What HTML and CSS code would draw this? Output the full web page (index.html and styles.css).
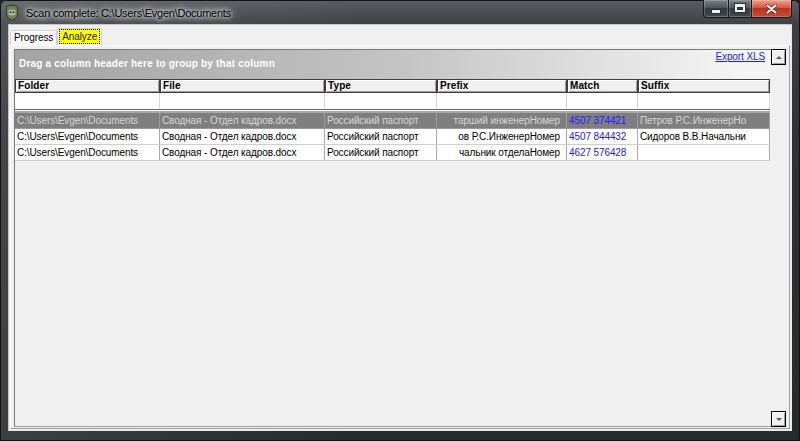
FILE: index.html
```html
<!DOCTYPE html>
<html lang="en">
<head>
    <meta charset="UTF-8">
    <title>Scan complete</title>
    <link rel="stylesheet" href="styles.css">
</head>
<body>
    <div class="window">
        <div class="titlebar">
            <svg class="app-icon" viewBox="0 0 12 15" width="14" height="17">
                <path d="M1 2.5 Q6 -0.5 11 2.5 L11 9 Q11 12.5 6 14.5 Q1 12.5 1 9 Z" fill="#6f8058" stroke="#2c3322" stroke-width="0.8"/>
                <rect x="3" y="5" width="6" height="5" rx="1" fill="#b9c3a3"/>
                <circle cx="4.7" cy="7.2" r="0.9" fill="#2c3322"/>
                <circle cx="7.3" cy="7.2" r="0.9" fill="#2c3322"/>
            </svg>
            <span class="title">Scan complete: C:\Users\Evgen\Documents</span>
            <div class="caption-buttons">
                <div class="cap-btn cap-min"><span></span></div>
                <div class="cap-btn cap-max"><span></span></div>
                <div class="cap-btn cap-close">
                    <svg viewBox="0 0 11 10" width="11" height="10">
                        <path d="M1.5 1.5 L9.5 8.5 M9.5 1.5 L1.5 8.5" stroke="#5b1a0f" stroke-width="3.6" stroke-linecap="round"/>
                        <path d="M1.5 1.5 L9.5 8.5 M9.5 1.5 L1.5 8.5" stroke="#fff" stroke-width="2.2" stroke-linecap="round"/>
                    </svg>
                </div>
            </div>
        </div>

        <div class="client">
            <div class="tabs">
                <div class="tab">Progress</div>
                <div class="tab tab-active"><span>Analyze</span></div>
            </div>

            <div class="tab-page">
                <div class="grid">
                    <div class="grid-main">
                        <div class="group-panel">
                            <span class="group-text">Drag a column header here to group by that column</span>
                            <a href="#" class="export-link">Export XLS</a>
                        </div>

                        <div class="cols header-row">
                            <div class="hcell">Folder</div>
                            <div class="hcell">File</div>
                            <div class="hcell">Type</div>
                            <div class="hcell">Prefix</div>
                            <div class="hcell">Match</div>
                            <div class="hcell">Suffix</div>
                        </div>

                        <div class="cols filter-row">
                            <div class="fcell"></div>
                            <div class="fcell"></div>
                            <div class="fcell"></div>
                            <div class="fcell"></div>
                            <div class="fcell"></div>
                            <div class="fcell"></div>
                        </div>

                        <div class="rows-sep"></div>

                        <div class="cols data-row selected">
                            <div class="cell">C:\Users\Evgen\Documents</div>
                            <div class="cell">Сводная - Отдел кадров.docx</div>
                            <div class="cell">Российский паспорт</div>
                            <div class="cell prefix">тарший инженерНомер</div>
                            <div class="cell match">4507 374421</div>
                            <div class="cell">Петров Р.С.ИнженерНо</div>
                        </div>
                        <div class="cols data-row">
                            <div class="cell">C:\Users\Evgen\Documents</div>
                            <div class="cell">Сводная - Отдел кадров.docx</div>
                            <div class="cell">Российский паспорт</div>
                            <div class="cell prefix">ов Р.С.ИнженерНомер</div>
                            <div class="cell match">4507 844432</div>
                            <div class="cell">Сидоров В.В.Начальни</div>
                        </div>
                        <div class="cols data-row">
                            <div class="cell">C:\Users\Evgen\Documents</div>
                            <div class="cell">Сводная - Отдел кадров.docx</div>
                            <div class="cell">Российский паспорт</div>
                            <div class="cell prefix">чальник отделаНомер</div>
                            <div class="cell match">4627 576428</div>
                            <div class="cell"></div>
                        </div>
                    </div>

                    <div class="vscroll">
                        <div class="scroll-btn"><span class="arrow-up"></span></div>
                        <div class="scroll-btn"><span class="arrow-down"></span></div>
                    </div>
                </div>
            </div>
        </div>
    </div>
</body>
</html>
```

FILE: styles.css
```css
* {
    margin: 0;
    padding: 0;
    box-sizing: border-box;
}

body {
    width: 800px;
    height: 441px;
    overflow: hidden;
    background: #1b2420;
    font-family: "Liberation Sans", Arial, sans-serif;
    font-size: 10px;
    letter-spacing: -0.1px;
    color: #000;
}

/* Window frame */
.window {
    width: 800px;
    height: 441px;
    display: flex;
    flex-direction: column;
    border-radius: 6px 6px 0 0;
    background:
        linear-gradient(to right, rgba(255, 255, 255, 0.10), rgba(255, 255, 255, 0) 45%),
        linear-gradient(to bottom, #5a5e62, #3d4145 24px, #2e3236 140px, #262a2d);
    box-shadow: inset 0 0 0 1px #101315;
}

.titlebar {
    height: 24px;
    display: flex;
    align-items: flex-start;
    padding-left: 5px;
}

.app-icon {
    flex: none;
    margin-top: 4px;
}

.title {
    margin-left: 7px;
    padding-top: 1px;
    font-size: 11px;
    letter-spacing: -0.25px;
    line-height: 24px;
    color: #000;
    text-shadow:
        0 0 4px #fff,
        0 0 7px rgba(255, 255, 255, 0.9),
        0 0 12px rgba(255, 255, 255, 0.6);
}

.caption-buttons {
    margin-left: auto;
    margin-right: 8px;
    display: flex;
    height: 18px;
}

.cap-btn {
    height: 18px;
    display: flex;
    align-items: center;
    justify-content: center;
    border: 1px solid #15181b;
    border-top: none;
    box-shadow: inset 0 0 0 1px rgba(255, 255, 255, 0.22);
    background: linear-gradient(#7a7f84, #50555a 45%, #363a3e 50%, #42474c);
}

.cap-min {
    width: 25px;
    border-radius: 0 0 0 4px;
    border-right: none;
}

.cap-min span {
    width: 10px;
    height: 5px;
    margin-top: 6px;
    background: #f2f2f2;
    border: 1px solid #2e3134;
}

.cap-max {
    width: 24px;
}

.cap-max span {
    width: 10px;
    height: 8px;
    margin-top: -1px;
    border: 2px solid #f2f2f2;
    border-top-width: 3px;
    box-shadow: 0 0 0 1px #2e3134, inset 0 0 0 1px #2e3134;
}

.cap-close {
    width: 40px;
    border-left: none;
    border-radius: 0 0 4px 0;
    background: linear-gradient(#e9a392, #d5583e 45%, #b9341c 50%, #c84d31);
}

/* Client area */
.client {
    flex: 1;
    margin: 0 8px 10px;
    padding: 2px 1px 1px;
    display: flex;
    flex-direction: column;
    background: #f0f0f0;
    border: 1px solid;
    border-color: #c4c7ca #e6e8ea #e6e8ea #c4c7ca;
}

.tabs {
    height: 18px;
    display: flex;
    align-items: flex-end;
}

.tab {
    height: 15px;
    padding: 0 3px;
    line-height: 14px;
    background: #fbfbfb;
    border: 1px solid #d2d2d2;
    border-bottom: none;
    border-radius: 2px 2px 0 0;
}

.tab-active {
    height: 17px;
    padding: 0 1px;
}

.tab-active span {
    display: block;
    height: 15px;
    line-height: 13px;
    padding: 0 2px;
    color: #222;
    background: #ffff00;
    border: 1px dotted #000;
}

.tab-page {
    flex: 1;
    display: flex;
    padding: 3px 2px 1px 3px;
    border: 1px solid;
    border-color: #fff #a0a0a0 #a0a0a0 #fff;
}

/* Grid */
.grid {
    flex: 1;
    display: flex;
}

.grid-main {
    flex: 1;
    display: flex;
    flex-direction: column;
    background: #f0f0f0;
    border-left: 1px solid #7a7a7a;
    border-top: 1px solid #7a7a7a;
    border-bottom: 1px solid #a0a0a0;
}

.group-panel {
    height: 29px;
    display: flex;
    justify-content: space-between;
    align-items: flex-start;
    padding: 0 6px 0 4px;
    background: linear-gradient(to right, #a3a3a3, #c3c3c3 50%, #f5f5f5 96%);
}

.group-text {
    margin-top: 8px;
    line-height: 12px;
    color: #fff;
    font-weight: bold;
    letter-spacing: 0.2px;
}

.export-link {
    margin-top: 1px;
    line-height: 12px;
    color: #1a1aff;
    text-decoration: underline;
}

.cols {
    display: grid;
    grid-template-columns: 145px 165px 112px 130px 71px 132px;
}

.header-row {
    height: 14px;
}

.hcell {
    padding-left: 2px;
    line-height: 12px;
    font-weight: bold;
    letter-spacing: 0.1px;
    background: #f0f0f0;
    border: 1px solid #3f3f3f;
    box-shadow: inset 1px 1px 0 #fff, inset -1px -1px 0 #a0a0a0;
}

.filter-row {
    height: 16px;
    background: #fff;
}

.fcell {
    border-right: 1px solid #d6d6d6;
}

.rows-sep {
    height: 4px;
    width: 755px;
    background: #fff;
    border-top: 1px solid #6a6a6a;
    border-bottom: 2px solid #a8a8a8;
}

.data-row {
    height: 16px;
    background: #fff;
    border-bottom: 1px solid #cfcfcf;
    width: 755px;
}

.cell {
    padding: 0 2px;
    line-height: 15px;
    white-space: nowrap;
    overflow: hidden;
    border-right: 1px solid #a8a8a8;
}

.cell.prefix {
    text-align: right;
    padding-right: 6px;
}

.cell.match {
    color: #1a1aff;
}

.data-row.selected {
    background: #7f7f7f;
    color: #d6d6d6;
    border-bottom-color: #9a9a9a;
}

.data-row.selected .cell {
    border-right-color: #9c9c9c;
}

.data-row.selected .match {
    color: #2020ff;
}

/* Vertical scroll bar */
.vscroll {
    width: 16px;
    display: flex;
    flex-direction: column;
    justify-content: space-between;
    background: #f0f0f0;
}

.scroll-btn {
    width: 15px;
    height: 16px;
    display: flex;
    align-items: center;
    justify-content: center;
    background: #f0f0f0;
    border: 1px solid #000;
    box-shadow: inset 1px 1px 0 #fff, inset -1px -1px 0 #a0a0a0;
}

.arrow-up {
    border-left: 3px solid transparent;
    border-right: 3px solid transparent;
    border-bottom: 3px solid #5a5a5a;
}

.arrow-down {
    border-left: 3px solid transparent;
    border-right: 3px solid transparent;
    border-top: 3px solid #5a5a5a;
}
```
